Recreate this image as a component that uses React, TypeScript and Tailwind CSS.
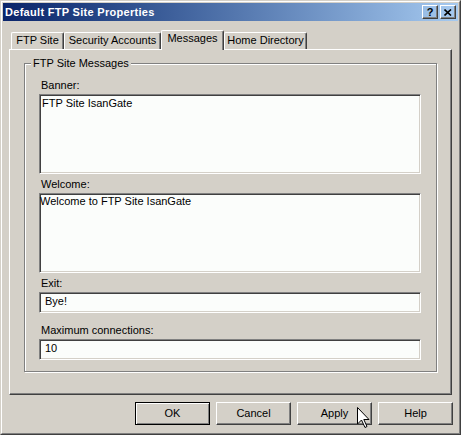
import React from "react";

const raised =
  "border border-t-white border-l-white border-r-[#404040] border-b-[#404040] shadow-[inset_-1px_-1px_0_#808080]";
const sunken =
  "border border-t-[#808080] border-l-[#808080] border-r-white border-b-white shadow-[inset_1px_1px_0_#404040,inset_-1px_-1px_0_#d4d0c8] bg-[#fbfdfb]";

function Tab({ label, width, selected }: { label: string; width: number; selected?: boolean }) {
  return (
    <div
      style={{ width }}
      className={
        selected
          ? "h-[20px] -mb-px relative z-10 bg-[#d4d0c8] border-t border-l border-r border-t-white border-l-white border-r-[#404040] shadow-[inset_-1px_0_0_#808080] rounded-t-[2px] flex justify-center pt-[1px]"
          : "h-[17px] border-t border-l border-r border-t-white border-l-white border-r-[#404040] shadow-[inset_-1px_0_0_#808080] rounded-t-[2px] flex justify-center pt-[1px]"
      }
    >
      <span className="whitespace-nowrap">{label}</span>
    </div>
  );
}

function Button({ label, def }: { label: string; def?: boolean }) {
  return (
    <div
      className={
        def
          ? "w-[75px] h-[23px] border border-black shadow-[inset_1px_1px_0_white,inset_-1px_-1px_0_#808080] flex items-center justify-center"
          : "w-[75px] h-[23px] " + raised + " flex items-center justify-center"
      }
    >
      {label}
    </div>
  );
}

export default function App() {
  return (
    <div className="w-[461px] h-[435px] bg-[#d4d0c8] font-['Liberation_Sans',Arial,sans-serif] text-[11px] leading-[13px] text-black select-none relative">
      <div className="w-full h-full border border-t-[#d4d0c8] border-l-[#d4d0c8] border-r-[#404040] border-b-[#404040]">
        <div className="w-full h-full border border-t-white border-l-white border-r-[#808080] border-b-[#808080] p-px flex flex-col">
          {/* Title bar */}
          <div className="h-[18px] shrink-0 flex items-center bg-linear-to-r from-[#0a246a] to-[#a6caf0] pl-[2px] pr-[2px]">
            <span className="font-bold text-white flex-1 whitespace-nowrap tracking-[0.3px]">Default FTP Site Properties</span>
            <div className="flex gap-[2px]">
              <div className={"w-[16px] h-[14px] " + raised + " flex items-center justify-center font-bold text-[11px] leading-[11px]"}>
                ?
              </div>
              <div className={"w-[16px] h-[14px] " + raised + " flex items-center justify-center"}>
                <svg width="8" height="7" viewBox="0 0 8 7">
                  <path d="M0.5 0.5 L7 6.5 M7 0.5 L0.5 6.5" stroke="black" strokeWidth="1.6" />
                </svg>
              </div>
            </div>
          </div>

          {/* Content */}
          <div className="flex-1 flex flex-col px-[6px] pt-[9px]">
            <div className="flex items-end pl-[2px] h-[19px]">
              <Tab label="FTP Site" width={53} />
              <Tab label="Security Accounts" width={97} />
              <Tab label="Messages" width={63} selected />
              <Tab label="Home Directory" width={83} />
            </div>
            <div className={"h-[346px] " + "border border-t-white border-l-white border-r-[#404040] border-b-[#404040] shadow-[inset_-1px_-1px_0_#808080] pl-[14px] pt-[13px]"}>
              <div className="relative w-[413px] h-[309px] border border-[#808080] shadow-[inset_1px_1px_0_white,1px_1px_0_white] pl-[14px] pt-[15px] flex flex-col">
                <span className="absolute left-[6px] top-[-7px] px-[2px] bg-[#d4d0c8] whitespace-nowrap">FTP Site Messages</span>
                <div className="pl-[2px]">Banner:</div>
                <div className={"mt-[2px] w-[382px] h-[80px] pl-[2px] pt-[2px] " + sunken}>FTP Site IsanGate</div>
                <div className="mt-[4px] pl-[2px]">Welcome:</div>
                <div className={"mt-[2px] w-[382px] h-[80px] pl-0 pt-[1px] " + sunken}>Welcome to FTP Site IsanGate</div>
                <div className="mt-[4px] pl-[2px]">Exit:</div>
                <div className={"mt-[2px] w-[382px] h-[21px] pl-[5px] pt-[2px] " + sunken}>Bye!</div>
                <div className="mt-[11px] pl-[2px]">Maximum connections:</div>
                <div className={"mt-[2px] w-[382px] h-[21px] pl-[5px] pt-[2px] " + sunken}>10</div>
              </div>
            </div>
            <div className="flex justify-end gap-[6px] -mr-px mt-[7px]">
              <Button label="OK" def />
              <Button label="Cancel" />
              <Button label="Apply" />
              <Button label="Help" />
            </div>
          </div>
        </div>
      </div>
      {/* mouse cursor */}
      <svg className="absolute left-[356px] top-[406px]" width="14" height="23" viewBox="0 0 14 23">
        <path d="M1.5 1.5 V18 L5.5 14 L9 21.5 L11 20.5 L7.8 13.5 H13 Z" fill="white" stroke="black" strokeWidth="1" />
      </svg>
    </div>
  );
}
